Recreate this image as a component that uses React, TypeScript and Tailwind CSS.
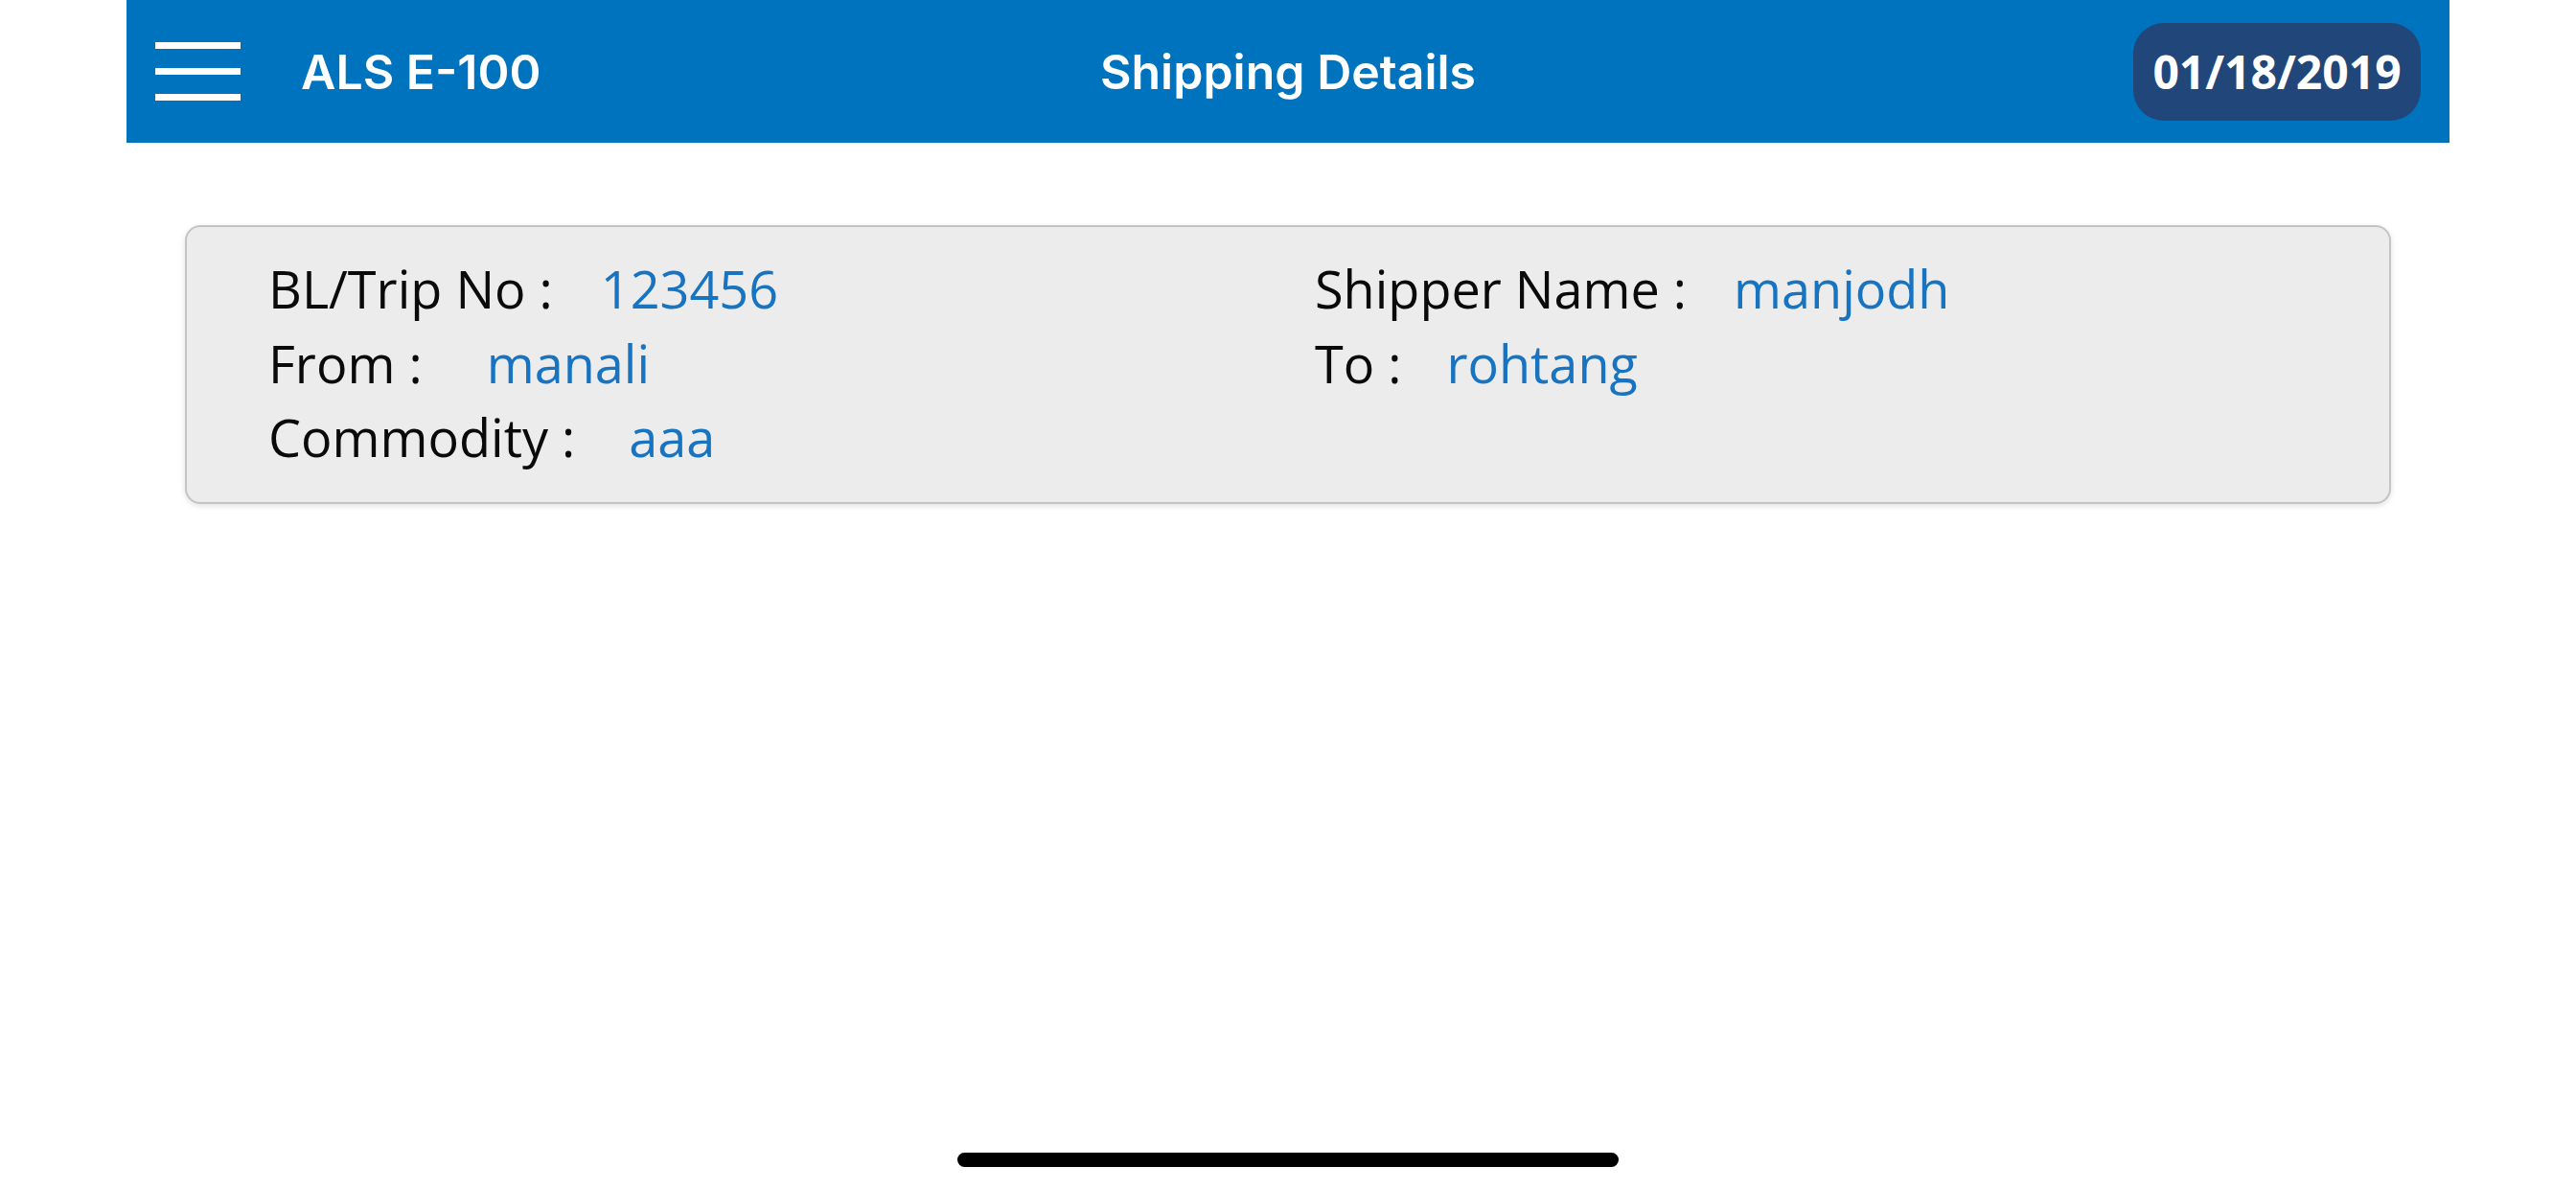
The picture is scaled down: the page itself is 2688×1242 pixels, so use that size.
import React from "react";

const rows: { label: string; value: string; gap: string }[][] = [
  [
    { label: "BL/Trip No :", value: "123456", gap: "ml-[50px]" },
    { label: "Shipper Name :", value: "manjodh", gap: "ml-[49px]" },
  ],
  [
    { label: "From :", value: "manali", gap: "ml-[67px]" },
    { label: "To :", value: "rohtang", gap: "ml-[47px]" },
  ],
  [{ label: "Commodity :", value: "aaa", gap: "ml-[56px]" }],
];

function Field({ label, value, gap }: { label: string; value: string; gap: string }) {
  return (
    <div className="flex items-baseline whitespace-nowrap">
      <span className="text-[#0a0a0a]">{label}</span>
      <span className={`${gap} text-[#1873c1]`}>{value}</span>
    </div>
  );
}

export default function App() {
  return (
    <div className="relative w-[2688px] h-[1242px] bg-white overflow-hidden">
      <header className="mx-[132px] h-[149px] bg-[#0073bf] flex items-center pl-[30px] pr-[30px]">
        <div className="flex-1 flex items-center">
          <div className="flex flex-col gap-[20px]">
            <div className="w-[89px] h-[7px] bg-white" />
            <div className="w-[89px] h-[7px] bg-white" />
            <div className="w-[89px] h-[7px] bg-white" />
          </div>
          <span className="ml-[63px] text-white text-[50px] font-semibold font-['Inter',sans-serif] leading-none">
            ALS E-100
          </span>
        </div>
        <h1 className="text-white text-[50px] font-semibold font-['Inter',sans-serif] leading-none">
          Shipping Details
        </h1>
        <div className="flex-1 flex justify-end">
          <div className="h-[102px] w-[300px] rounded-[32px] bg-[#21467a] flex items-center justify-center text-white text-[48px] font-bold font-['Open_Sans',sans-serif] leading-none">
            01/18/2019
          </div>
        </div>
      </header>

      <section className="mx-[193px] mt-[86px] h-[291px] rounded-[16px] border-2 border-[#c4c4c4] bg-[#ececec] shadow-[0_2px_6px_rgba(0,0,0,0.12)] pl-[85px] pt-[26px] font-['Open_Sans',sans-serif] text-[54px] leading-[77.5px]">
        {rows.map((row, i) => (
          <div key={i} className="grid grid-cols-[1092px_1fr]">
            {row.map((f) => (
              <Field key={f.label} {...f} />
            ))}
          </div>
        ))}
      </section>

      <div className="absolute left-[999px] top-[1203px] w-[690px] h-[15px] rounded-full bg-black" />
    </div>
  );
}
